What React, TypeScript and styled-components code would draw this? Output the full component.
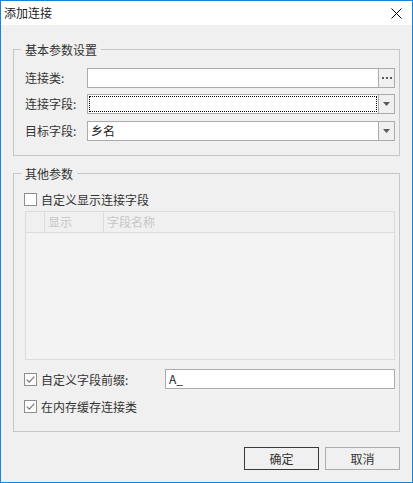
import React from 'react';
import styled, { createGlobalStyle } from 'styled-components';

const Global = createGlobalStyle`
  html, body { margin: 0; padding: 0; background: #ffffff; }
  body {
    font-family: "Noto Sans CJK SC", "Microsoft YaHei", sans-serif;
    font-size: 12px;
    color: #333333;
  }
  * { box-sizing: border-box; }
`;

const Window = styled.div`
  width: 413px;
  height: 483px;
  border: 1px solid #1883d7;
  background: #f0f0f0;
  display: flex;
  flex-direction: column;
`;

const TitleBar = styled.div`
  height: 24px;
  flex-shrink: 0;
  background: #ffffff;
  display: flex;
  align-items: center;
  justify-content: space-between;
  padding: 0 10px 0 3px;
`;

const Title = styled.span`
  font-size: 12px;
  line-height: 24px;
  color: #1a1a1a;
`;

const CloseIcon = styled.svg`
  width: 11px;
  height: 11px;
  display: block;
  margin-top: 1px;
`;

const Body = styled.div`
  flex: 1;
  display: flex;
  flex-direction: column;
  padding: 16px 12px 12px;
`;

const Group = styled.fieldset<{ $pt: number; $pb: number; $mt?: number }>`
  margin: ${(p) => p.$mt ?? 0}px 0 0;
  min-width: 0;
  border: 1px solid #c6c6c6;
  padding: ${(p) => p.$pt}px 4px ${(p) => p.$pb}px 10px;
  display: flex;
  flex-direction: column;
`;

const Legend = styled.legend`
  margin-left: -3px;
  padding: 0 4px;
  height: 17px;
  line-height: 17px;
  font-size: 12px;
  color: #333333;
`;

const Rows = styled.div`
  display: flex;
  flex-direction: column;
  gap: 6px;
`;

const FormRow = styled.div<{ $h?: number }>`
  display: flex;
  align-items: center;
  height: ${(p) => p.$h ?? 20}px;
`;

const Label = styled.span`
  width: 63px;
  flex-shrink: 0;
  padding-left: 1px;
  line-height: 20px;
  white-space: nowrap;
`;

const FieldBox = styled.div`
  flex: 1;
  height: 20px;
  display: flex;
  border: 1px solid #ababab;
  background: #ffffff;
`;

const TextArea = styled.div<{ $focused?: boolean }>`
  flex: 1;
  display: flex;
  align-items: center;
  line-height: 18px;
  color: #222222;
  margin: ${(p) => (p.$focused ? '1px' : '0')};
  border: ${(p) => (p.$focused ? '1px dotted #000000' : 'none')};
  padding-left: ${(p) => (p.$focused ? '1px' : '3px')};
`;

const SideButton = styled.div`
  width: 16px;
  flex-shrink: 0;
  border-left: 1px solid #ababab;
  background: #f0f0f0;
  display: flex;
  align-items: center;
  justify-content: center;
`;

const Icon = styled.svg`
  display: block;
`;

const CheckRow = styled.div<{ $mt?: number }>`
  display: flex;
  align-items: center;
  gap: 4px;
  height: 17px;
  margin-top: ${(p) => p.$mt ?? 0}px;
  white-space: nowrap;
`;

const Box = styled.div`
  width: 13px;
  height: 13px;
  flex-shrink: 0;
  border: 1px solid #8e8e8e;
  background: #ffffff;
  display: flex;
  align-items: center;
  justify-content: center;
`;

const PrefixRow = styled.div`
  display: flex;
  align-items: center;
  height: 20px;
  margin-top: 9px;
`;

const PrefixLabel = styled.label`
  width: 141px;
  flex-shrink: 0;
  display: flex;
  align-items: center;
  gap: 4px;
  white-space: nowrap;
`;

const Table = styled.div`
  margin: 3px 0 0 1px;
  height: 149px;
  border: 1px solid #dcdcdc;
  background: #f3f3f3;
  display: flex;
  flex-direction: column;
`;

const HeaderRow = styled.div`
  height: 21px;
  display: grid;
  grid-template-columns: 19px 59px 1fr;
  border-bottom: 1px solid #dcdcdc;
  background: #f0f0f0;
`;

const HeaderCell = styled.div<{ $last?: boolean }>`
  border-right: ${(p) => (p.$last ? 'none' : '1px solid #dcdcdc')};
  padding-left: 3px;
  line-height: 20px;
  color: #c6c6c6;
  white-space: nowrap;
`;

const Footer = styled.div`
  margin-top: 15px;
  display: flex;
  justify-content: flex-end;
  gap: 6px;
`;

const Button = styled.div<{ $default?: boolean }>`
  width: 75px;
  height: 23px;
  border: 1px solid ${(p) => (p.$default ? '#3a3a3a' : '#adadad')};
  background: #f0f0f0;
  display: flex;
  align-items: center;
  justify-content: center;
  color: #333333;
  line-height: 21px;
`;

const Check: React.FC<{ checked?: boolean }> = ({ checked }) => (
  <Box>
    {checked && (
      <Icon width="9" height="9" viewBox="0 0 9 9">
        <path d="M0.8 4.6 L3.3 7.1 L8.3 1.6" fill="none" stroke="#7a7a7a" strokeWidth="1.3" />
      </Icon>
    )}
  </Box>
);

const Arrow = () => (
  <Icon width="7" height="4" viewBox="0 0 7 4">
    <polygon points="0,0 7,0 3.5,4" fill="#5a5a5a" />
  </Icon>
);

const Dots = () => (
  <Icon width="10" height="2" viewBox="0 0 10 2">
    <rect x="0" y="0" width="2" height="2" fill="#5a5a5a" />
    <rect x="4" y="0" width="2" height="2" fill="#5a5a5a" />
    <rect x="8" y="0" width="2" height="2" fill="#5a5a5a" />
  </Icon>
);

export default function App() {
  return (
    <>
      <Global />
      <Window>
        <TitleBar>
          <Title>添加连接</Title>
          <CloseIcon viewBox="0 0 11 11">
            <path d="M0.5 0.5 L10.5 10.5 M10.5 0.5 L0.5 10.5" stroke="#000" strokeWidth="1" fill="none" />
          </CloseIcon>
        </TitleBar>
        <Body>
          <Group $pt={10} $pb={14}>
            <Legend>基本参数设置</Legend>
            <Rows>
              <FormRow>
                <Label>连接类:</Label>
                <FieldBox>
                  <TextArea />
                  <SideButton>
                    <Dots />
                  </SideButton>
                </FieldBox>
              </FormRow>
              <FormRow>
                <Label>连接字段:</Label>
                <FieldBox>
                  <TextArea $focused />
                  <SideButton>
                    <Arrow />
                  </SideButton>
                </FieldBox>
              </FormRow>
              <FormRow $h={21}>
                <Label>目标字段:</Label>
                <FieldBox>
                  <TextArea>乡名</TextArea>
                  <SideButton>
                    <Arrow />
                  </SideButton>
                </FieldBox>
              </FormRow>
            </Rows>
          </Group>

          <Group $pt={9} $pb={16} $mt={9}>
            <Legend>其他参数</Legend>
            <CheckRow>
              <Check />
              <span>自定义显示连接字段</span>
            </CheckRow>
            <Table>
              <HeaderRow>
                <HeaderCell />
                <HeaderCell>显示</HeaderCell>
                <HeaderCell $last>字段名称</HeaderCell>
              </HeaderRow>
            </Table>
            <PrefixRow>
              <PrefixLabel>
                <Check checked />
                <span>自定义字段前缀:</span>
              </PrefixLabel>
              <FieldBox>
                <TextArea>A_</TextArea>
              </FieldBox>
            </PrefixRow>
            <CheckRow $mt={9}>
              <Check checked />
              <span>在内存缓存连接类</span>
            </CheckRow>
          </Group>

          <Footer>
            <Button $default>确定</Button>
            <Button>取消</Button>
          </Footer>
        </Body>
      </Window>
    </>
  );
}
